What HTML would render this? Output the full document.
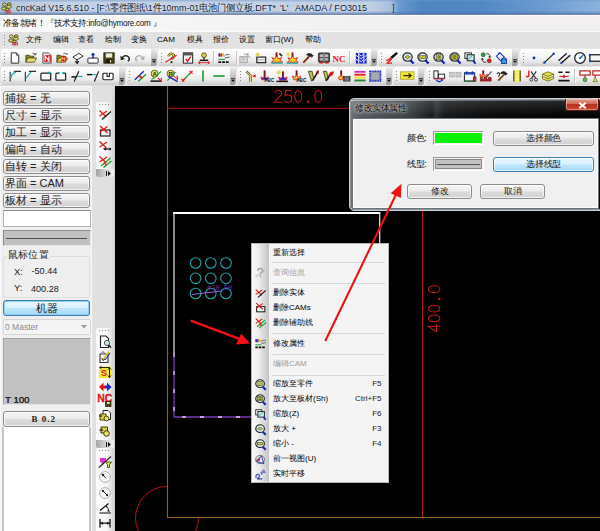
<!DOCTYPE html>
<html><head><meta charset="utf-8">
<style>
*{box-sizing:border-box;margin:0;padding:0}
html,body{width:600px;height:531px;overflow:hidden;background:#f0f0f0;font-family:"Liberation Sans",sans-serif;}
#root{position:relative;width:600px;height:531px;overflow:hidden;background:#f0f0f0}
.abs{position:absolute}
.t{position:absolute;white-space:nowrap;line-height:1}
#title{left:0;top:0;width:600px;height:15px;background:linear-gradient(rgba(110,150,205,.55) 0,rgba(255,255,255,0) 2.5px,rgba(255,255,255,0) 11px,rgba(80,115,175,.6) 13.5px,#7d8794 15px),linear-gradient(90deg,#aebfd8 0,#b9c8de 16px,#c2d0e3 60px,#c2d0e3 370px,#a9c0de 390px,#6a99cf 399px,#4f86c2 420px,#5088c4 480px,#6a9ad0 540px,#8ab2dc 600px)}
#status{left:0;top:15px;width:600px;height:16px;background:linear-gradient(90deg,#fafafa 0,#f6f5f5 200px,#f1efef 400px);border-top:1px solid #fdfdfd}
#menubar{left:0;top:30.5px;width:600px;height:18px;background:#e2e2e2;border-top:1px solid #fbfbfb}
.tb{position:absolute;height:18px;border-radius:3px;background:linear-gradient(#fefefe 0%,#f7f7f7 40%,#e9e9e9 72%,#cdcdcd 100%);}
.tb .chev{position:absolute;right:0;top:0;width:6px;height:100%;background:linear-gradient(#ececec,#c4c4c4 50%,#9c9c9c);border-radius:0 3px 3px 0}
.grip{position:absolute;left:3px;top:4px;width:1px;height:10px;background:repeating-linear-gradient(#8a8a8a 0 1px,transparent 1px 3px)}
.ic{position:absolute;width:14px;height:14px;overflow:visible;transform:scale(.93)}
#canvas{left:115px;top:86px;width:485px;height:445px;background:#000}
.btn{position:absolute;border:1px solid #8c8c8c;border-radius:3px;background:linear-gradient(#f6f6f6 0%,#eaeaea 48%,#dcdcdc 52%,#d2d2d2 100%);box-shadow:inset 0 0 0 1px rgba(255,255,255,.7);color:#222;}
.lbtn{left:3px;width:87px;height:15px;font-size:11px;line-height:13.5px;padding-left:1px;margin-top:.5px;white-space:nowrap;overflow:hidden}
.mi{position:absolute;left:273px;font-size:8px;line-height:1;color:#000;white-space:nowrap}
.mk{position:absolute;font-size:8px;line-height:1;color:#1a1a1a;white-space:nowrap;right:0}
.msep{position:absolute;left:272px;width:113px;height:1px;background:#d8d8d8}
.c{display:inline-block;width:1em;text-align:center;font-style:normal;overflow:visible;white-space:nowrap}
</style></head><body><div id="root">

<!-- title bar -->
<div id="title" class="abs"></div>
<svg class="abs" style="left:0.5px;top:2px" width="11.5" height="11.5" viewBox="0 0 11.5 12"><g stroke="#33331a" stroke-width=".8"><ellipse cx="3.2" cy="2.6" rx="1.9" ry="1.6" fill="#ece468"/><ellipse cx="8.3" cy="2.2" rx="2" ry="1.3" fill="#d0c848"/><ellipse cx="2.8" cy="6.8" rx="2.4" ry="1.7" fill="#dcd448"/><ellipse cx="8" cy="5" rx="2.7" ry="1.5" fill="#ece468"/><ellipse cx="6.3" cy="7.8" rx="2" ry="1.2" fill="#d0c848"/></g><rect x="4.2" y="8.8" width="6" height="3" fill="#b02c34"/><path d="M5 9.6L5.7 11.2L6.4 9.6M7.3 9.6V11.2M8.2 11H9.4V10.3H8.4V9.7H9.5" stroke="#f0d0d0" stroke-width=".45" fill="none"/></svg>
<div class="t" style="left:15.5px;top:2.5px;font-size:9.6px;color:#141c30;transform-origin:0 0;transform:scaleX(.929);text-shadow:0 0 3px rgba(255,255,255,.7)">cncKad V15.6.510 - [F:\<i class="c">零</i><i class="c">件</i><i class="c">图</i><i class="c">纸</i>\1<i class="c">件</i>10mm-01<i class="c">电</i><i class="c">池</i><i class="c">门</i><i class="c">侧</i><i class="c">立</i><i class="c">板</i>.DFT*</div>
<div class="t" style="left:280px;top:2.5px;font-size:9.6px;color:#141c30;transform-origin:0 0;transform:scaleX(.9465);text-shadow:0 0 3px rgba(255,255,255,.7)">'L'</div>
<div class="t" style="left:294.5px;top:2.5px;font-size:9.6px;color:#141c30;transform-origin:0 0;transform:scaleX(.9465);text-shadow:0 0 3px rgba(255,255,255,.7)">AMADA / FO3015</div>
<div class="t" style="left:391.5px;top:2.5px;font-size:9.6px;color:#141c30;transform-origin:0 0;transform:scaleX(.9465);text-shadow:0 0 3px rgba(255,255,255,.7)">]</div>

<!-- status -->
<div id="status" class="abs"></div>
<div class="t" style="left:2.5px;top:19px;font-size:8.6px;color:#111"><i class="c">准</i><i class="c">备</i><i class="c">就</i><i class="c">绪</i><i class="c">！</i></div>
<div class="t" style="left:46px;top:19px;font-size:8.6px;color:#111;letter-spacing:-0.25px;transform-origin:0 0;transform:scaleX(.94)"><i class="c">『</i><i class="c">技</i><i class="c">术</i><i class="c">支</i><i class="c">持</i>:info@hymore.com <i class="c">』</i></div>

<!-- menubar -->
<div id="menubar" class="abs"></div>
<div class="grip" style="left:4px;top:35px;height:10px"></div>
<svg class="abs" style="left:8px;top:34px" width="11.5" height="11.5" viewBox="0 0 11.5 12"><g stroke="#33331a" stroke-width=".8"><ellipse cx="3.2" cy="2.6" rx="1.9" ry="1.6" fill="#ece468"/><ellipse cx="8.3" cy="2.2" rx="2" ry="1.3" fill="#d0c848"/><ellipse cx="2.8" cy="6.8" rx="2.4" ry="1.7" fill="#dcd448"/><ellipse cx="8" cy="5" rx="2.7" ry="1.5" fill="#ece468"/><ellipse cx="6.3" cy="7.8" rx="2" ry="1.2" fill="#d0c848"/></g><rect x="4.2" y="8.8" width="6" height="3" fill="#b02c34"/><path d="M5 9.6L5.7 11.2L6.4 9.6M7.3 9.6V11.2M8.2 11H9.4V10.3H8.4V9.7H9.5" stroke="#f0d0d0" stroke-width=".45" fill="none"/></svg>
<div class="t" style="left:26px;top:35.5px;font-size:8.1px;color:#000"><i class="c">文</i><i class="c">件</i></div>
<div class="t" style="left:52.5px;top:35.5px;font-size:8.1px;color:#000"><i class="c">编</i><i class="c">辑</i></div>
<div class="t" style="left:78px;top:35.5px;font-size:8.1px;color:#000"><i class="c">查</i><i class="c">看</i></div>
<div class="t" style="left:104.5px;top:35.5px;font-size:8.1px;color:#000"><i class="c">绘</i><i class="c">制</i></div>
<div class="t" style="left:130.5px;top:35.5px;font-size:8.1px;color:#000"><i class="c">变</i><i class="c">换</i></div>
<div class="t" style="left:157px;top:35.5px;font-size:8.1px;color:#000">CAM</div>
<div class="t" style="left:186.5px;top:35.5px;font-size:8.1px;color:#000"><i class="c">模</i><i class="c">具</i></div>
<div class="t" style="left:212.5px;top:35.5px;font-size:8.1px;color:#000"><i class="c">报</i><i class="c">价</i></div>
<div class="t" style="left:238.5px;top:35.5px;font-size:8.1px;color:#000"><i class="c">设</i><i class="c">置</i></div>
<div class="t" style="left:264.5px;top:35.5px;font-size:8.1px;color:#000"><i class="c">窗</i><i class="c">口</i>(W)</div>
<div class="t" style="left:304.5px;top:35.5px;font-size:8.1px;color:#000"><i class="c">帮</i><i class="c">助</i></div>

<!-- TOOLBARS placeholder -->
<!--TB-->
<div class="abs" style="left:0;top:48px;width:600px;height:38px;background:#e9e9e9"></div>
<div class="tb" style="left:1px;top:48.5px;width:156px;height:17.5px"><div class="grip"></div><div class="chev"><svg style="position:absolute;left:1px;top:10.5px" width="4" height="4.5" viewBox="0 0 5 5"><path d="M0 .5H5" stroke="#111" stroke-width="1"/><path d="M0 2H5L2.5 4.8Z" fill="#111"/></svg></div></div>
<svg class="ic" style="left:7.5px;top:50.5px" viewBox="0 0 14 14"><path d="M3 1.5H8.5L11 4V12.5H3Z" fill="#fff" stroke="#222" stroke-width="1"/><path d="M8.5 1.5V4H11" fill="none" stroke="#222" stroke-width=".8"/></svg>
<svg class="ic" style="left:24.0px;top:50.5px" viewBox="0 0 14 14"><path d="M1.5 11.5V4H5L6 5H10V7" fill="#8a8420" stroke="#3a3a10" stroke-width=".8"/><path d="M1.5 11.5L3.5 7H13L10.5 11.5Z" fill="#e8e070" stroke="#3a3a10" stroke-width=".8"/><path d="M8.5 2.5C10 1.5 11.5 2 12 3.5M12 3.5L12.8 1.8M12 3.5L10.3 3.6" fill="none" stroke="#222" stroke-width=".8"/></svg>
<svg class="ic" style="left:39.5px;top:50.5px" viewBox="0 0 14 14"><path d="M2.5 1.5H8.5L11.5 4V12.5H2.5Z" fill="#e8e8e8" stroke="#555" stroke-width="1"/><rect x="3.5" y="4" width="7.5" height="7" fill="#e01010"/><path d="M5 10V5L9 10V5" fill="none" stroke="#fff" stroke-width="1.3"/></svg>
<svg class="ic" style="left:55.0px;top:50.5px" viewBox="0 0 14 14"><path d="M1.5 11.5V4H5L6 5H10V7" fill="#8a8420" stroke="#3a3a10" stroke-width=".8"/><path d="M1.5 11.5L3.5 7H13L10.5 11.5Z" fill="#e8c850" stroke="#3a3a10" stroke-width=".8"/><rect x="6" y="5" width="5.5" height="5.5" fill="#e01010"/><path d="M7 9.5V6L10 9.5V6" fill="none" stroke="#f8e8a0" stroke-width=".9"/><path d="M8.5 2.5C10 1.5 11.5 2 12 3.5M12 3.5L12.8 1.8" fill="none" stroke="#222" stroke-width=".8"/></svg>
<svg class="ic" style="left:70.5px;top:50.5px" viewBox="0 0 14 14"><path d="M1.5 6L8 2L12.5 5L6 9Z" fill="#fff" stroke="#222" stroke-width="1"/><path d="M6 9V12M4 10.5L6 12.8L8 10.5" fill="none" stroke="#111" stroke-width="1.2"/></svg>
<svg class="ic" style="left:86.0px;top:50.5px" viewBox="0 0 14 14"><rect x="1.5" y="7" width="11" height="5.5" rx="1" fill="#fff" stroke="#222" stroke-width="1"/><path d="M7 7.5V2.5" stroke="#1030c0" stroke-width="1.6"/><path d="M4.5 4L7 1L9.5 4Z" fill="#1030c0"/></svg>
<svg class="ic" style="left:102.0px;top:50.5px" viewBox="0 0 14 14"><rect x="1.5" y="1.5" width="11" height="11" fill="#4a4410" stroke="#1a1a08" stroke-width="1"/><rect x="3.5" y="2" width="7" height="4.5" fill="#f0f0e0"/><rect x="4" y="8.5" width="6" height="4" fill="#1a1a08"/><rect x="8" y="9.3" width="1.4" height="2.6" fill="#e8e8d0"/></svg>
<svg class="ic" style="left:117.5px;top:50.5px" viewBox="0 0 14 14"><path d="M4 7C5 4.5 9 3.5 11 6C12 7.5 11.5 9.5 10 10.5" fill="none" stroke="#222" stroke-width="1.5"/><path d="M2 4.5L2.5 9.5L7 8Z" fill="#222"/></svg>
<svg class="ic" style="left:133.0px;top:50.5px" viewBox="0 0 14 14"><path d="M10 7C9 4.5 5 3.5 3 6C2 7.5 2.5 9.5 4 10.5" fill="none" stroke="#b0b0b0" stroke-width="1.5"/><path d="M12 4.5L11.5 9.5L7 8Z" fill="#b0b0b0"/></svg>
<div class="tb" style="left:158px;top:48.5px;width:219px;height:17.5px"><div class="grip"></div><div class="chev"><svg style="position:absolute;left:1px;top:10.5px" width="4" height="4.5" viewBox="0 0 5 5"><path d="M0 .5H5" stroke="#111" stroke-width="1"/><path d="M0 2H5L2.5 4.8Z" fill="#111"/></svg></div></div>
<svg class="ic" style="left:163.7px;top:50.5px" viewBox="0 0 14 14"><path d="M4.5 5C4.5 1.5 10 1.5 10 5C10 7 7.5 7 7.5 9" fill="none" stroke="#3a3a10" stroke-width="2.6"/><path d="M4.5 5C4.5 1.5 10 1.5 10 5C10 7 7.5 7 7.5 9" fill="none" stroke="#e0d840" stroke-width="1.3"/><circle cx="7.5" cy="11.5" r="1.2" fill="#3a3a10"/><path d="M1 11.5L13 4" stroke="#e01818" stroke-width="1.2"/></svg>
<svg class="ic" style="left:181.0px;top:50.5px" viewBox="0 0 14 14"><rect x="2" y="1.5" width="10" height="11" fill="#fff" stroke="#333" stroke-width="1.2"/><rect x="2" y="1.5" width="10" height="2.8" fill="#555"/><path d="M4.5 8L6.5 10.5L10 5.5" fill="none" stroke="#e01818" stroke-width="1.6"/></svg>
<svg class="ic" style="left:196.5px;top:50.5px" viewBox="0 0 14 14"><circle cx="7" cy="4" r="2.6" fill="#d8d040" stroke="#3a3a10" stroke-width=".8"/><path d="M7 6.5V9" stroke="#3a3a10" stroke-width="1.6"/><path d="M2.5 9.5H11.5" stroke="#111" stroke-width="1.6"/><path d="M1 12H13M1 12L3 10.5M1 12L3 13.5M13 12L11 10.5M13 12L11 13.5" stroke="#e01818" stroke-width="1" fill="none"/></svg>
<svg class="ic" style="left:217.0px;top:50.5px" viewBox="0 0 14 14"><rect x="1" y="2" width="2" height="3.5" fill="#2030d0"/><rect x="3" y="2" width="2" height="3.5" fill="#d02020"/><rect x="5" y="2" width="2" height="3.5" fill="#e0c020"/><path d="M7.5 5C9 3 11 3 13 3.5M8 7L13 6" stroke="#555" stroke-width="1" fill="none"/><path d="M1 8.5H8" stroke="#20a040" stroke-width="1.2"/><path d="M1 11.5H13" stroke="#111" stroke-width="2" stroke-dasharray="3 1"/></svg>
<svg class="ic" style="left:238.0px;top:50.5px" viewBox="0 0 14 14"><rect x="1.5" y="5.5" width="8" height="6.5" fill="#d8d8d8" stroke="#a8a8a8" stroke-width="1"/><path d="M8 2L12.5 7M6 2.5L7.5 4M10.5 1.5L10 3.5" stroke="#a0a0a0" stroke-width="1.2"/><circle cx="5" cy="8" r="1.8" fill="#c0c0c0"/></svg>
<svg class="ic" style="left:254.0px;top:50.5px" viewBox="0 0 14 14"><rect x="2.5" y="6" width="9.5" height="6" fill="#f4f4f4" stroke="#222" stroke-width="1.3"/><path d="M3 9H12" stroke="#888" stroke-width=".8"/><path d="M3.5 1V6M1 3.5H6M1.7 1.7L5.3 5.3M5.3 1.7L1.7 5.3" stroke="#d8d020" stroke-width=".9"/></svg>
<svg class="ic" style="left:270.0px;top:50.5px" viewBox="0 0 14 14"><path d="M6.5 1V8" stroke="#7a1010" stroke-width="2"/><path d="M6.5 5L9 8L12 6.5L10.5 9.5L13 11.5H1L3.5 9.5L1.5 6.5L4.5 8Z" fill="#f0d030" stroke="#e02020" stroke-width=".9"/><path d="M1 12.5H13" stroke="#20a0a0" stroke-width="1.3"/><path d="M9.5 2L12.5 5" stroke="#222" stroke-width="1.6"/><path d="M8.5 1.2L9.5 2" stroke="#d8d020" stroke-width="1"/></svg>
<svg class="ic" style="left:285.0px;top:50.5px" viewBox="0 0 14 14"><path d="M7.5 1V8" stroke="#7a1010" stroke-width="2"/><path d="M7.5 5L10 8L13 6.5L11.5 9.5L13.5 11.5H2L4.5 9.5L2.5 6.5L5.5 8Z" fill="#f0d030" stroke="#e02020" stroke-width=".9"/><path d="M1 12.5H13.5" stroke="#20a0a0" stroke-width="1.3"/><path d="M3 .5V5M.8 2.8H5.2M1.4 1.2L4.6 4.4M4.6 1.2L1.4 4.4" stroke="#d8d020" stroke-width=".8"/></svg>
<svg class="ic" style="left:300.5px;top:50.5px" viewBox="0 0 14 14"><path d="M2 12L8.5 5" stroke="#7a2a10" stroke-width="2"/><path d="M5.5 3.5C7.5 1.5 10.5 2 12.5 4.5L11 6L8.5 4.5Z" fill="#222" stroke="#222" stroke-width="1"/></svg>
<svg class="ic" style="left:316.5px;top:50.5px" viewBox="0 0 14 14"><rect x="1" y="1.5" width="12" height="10" rx="1" fill="#484848" stroke="#222" stroke-width=".8"/><rect x="2.5" y="3" width="3.5" height="3" fill="#b8b8b8"/><rect x="8" y="3" width="3.5" height="3" fill="#b8b8b8"/><rect x="2.5" y="7" width="3.5" height="3" fill="#a8a8a8"/><rect x="8" y="7" width="3.5" height="3" fill="#a8a8a8"/><path d="M7 2V11" stroke="#ddd" stroke-width=".8"/><path d="M2 12H6M8 12H12" stroke="#e01818" stroke-width="1.6"/></svg>
<svg class="ic" style="left:332.0px;top:50.5px" viewBox="0 0 14 14"><text x="7" y="11" text-anchor="middle" font-family="Liberation Serif" font-weight="bold" font-size="9.6" fill="#e01818">NC</text></svg>
<svg class="ic" style="left:353.5px;top:50.5px" viewBox="0 0 14 14"><rect x="1.5" y="1.5" width="11.5" height="11.5" fill="#1828d0"/><path d="M4.5 1.5V13M10 1.5V13" stroke="#e8e8ff" stroke-width="1.2"/><path d="M5 3L7.2 5L9.5 3M5 6L7.2 8L9.5 6M5 9L7.2 11L9.5 9M1.5 4L4 6M1.5 8L4 10M13 4L10.5 6M13 8L10.5 10" stroke="#e8e8ff" stroke-width="1" fill="none"/></svg>
<div class="abs" style="left:213px;top:50.5px;width:1px;height:14px;background:#c4c4c4;border-right:1px solid #fafafa;width:2px"></div>
<div class="abs" style="left:236px;top:50.5px;width:1px;height:14px;background:#c4c4c4;border-right:1px solid #fafafa;width:2px"></div>
<div class="abs" style="left:349px;top:50.5px;width:1px;height:14px;background:#c4c4c4;border-right:1px solid #fafafa;width:2px"></div>
<div class="tb" style="left:378px;top:48.5px;width:140px;height:17.5px"><div class="grip"></div><div class="chev"><svg style="position:absolute;left:1px;top:10.5px" width="4" height="4.5" viewBox="0 0 5 5"><path d="M0 .5H5" stroke="#111" stroke-width="1"/><path d="M0 2H5L2.5 4.8Z" fill="#111"/></svg></div></div>
<svg class="ic" style="left:385.0px;top:50.5px" viewBox="0 0 14 14"><path d="M12.5 1.5L6 7" stroke="#111" stroke-width="2.6"/><path d="M6.5 6.5L1 10M6.5 8L2 12.5H7" stroke="#e01818" stroke-width="1.5" fill="none"/></svg>
<svg class="ic" style="left:400.5px;top:50.5px" viewBox="0 0 14 14"><path d="M9.5 9.5L13 13" stroke="#1020c0" stroke-width="2.4"/><ellipse cx="6.5" cy="6" rx="5" ry="4.5" fill="#d8f0f0" stroke="#222" stroke-width="1.3"/><path d="M3.5 6L6.5 4L9.5 6L6.5 8Z" fill="#c8c030" stroke="#444" stroke-width=".6"/></svg>
<svg class="ic" style="left:416.0px;top:50.5px" viewBox="0 0 14 14"><path d="M9.5 9.5L13 13" stroke="#1020c0" stroke-width="2.4"/><ellipse cx="6.5" cy="6" rx="5" ry="4.5" fill="#d8f0f0" stroke="#222" stroke-width="1.3"/><rect x="3.5" y="4.5" width="6" height="3" fill="#c8c030" stroke="#444" stroke-width=".6"/></svg>
<svg class="ic" style="left:432.0px;top:50.5px" viewBox="0 0 14 14"><path d="M9.5 9.5L13 13" stroke="#1020c0" stroke-width="2.4"/><ellipse cx="6.5" cy="6" rx="5" ry="4.5" fill="#d8f0f0" stroke="#222" stroke-width="1.3"/><rect x="4" y="3.5" width="5" height="5" fill="#c8c030" stroke="#444" stroke-width=".6"/><path d="M5.5 5H7.5V7H5.5" stroke="#333" stroke-width=".6" fill="none"/></svg>
<svg class="ic" style="left:447.7px;top:50.5px" viewBox="0 0 14 14"><path d="M9.5 9.5L13 13" stroke="#1020c0" stroke-width="2.4"/><ellipse cx="6.5" cy="6" rx="5" ry="4.5" fill="#d8f0f0" stroke="#222" stroke-width="1.3"/><rect x="3.5" y="3.5" width="6" height="5" fill="#b8b028" stroke="#444" stroke-width=".6"/><path d="M5 5H8M5 7H8" stroke="#333" stroke-width=".7"/></svg>
<svg class="ic" style="left:463.0px;top:50.5px" viewBox="0 0 14 14"><rect x="1.5" y="1.5" width="7" height="6" fill="#fff" stroke="#222" stroke-width="1"/><rect x="4" y="3.5" width="7.5" height="6.5" fill="#d0ecec" stroke="#222" stroke-width="1.1"/><path d="M4.5 9L10 4" stroke="#20a0a0" stroke-width="1"/><path d="M10.5 10L13 13" stroke="#1020c0" stroke-width="2"/></svg>
<svg class="ic" style="left:478.5px;top:50.5px" viewBox="0 0 14 14"><circle cx="4" cy="3.5" r="2.2" fill="#20a040" stroke="#104010" stroke-width=".6"/><circle cx="10.5" cy="10" r="2.2" fill="#e02020" stroke="#601010" stroke-width=".6"/><path d="M7.5 2.5C10 2 11.5 3.5 11 6M3 8C2.5 10.5 4.5 12 7 11.5" stroke="#222" stroke-width="1" fill="none"/><path d="M10 5L11 7L12.5 5M2 9L3 7L4.5 9" stroke="#222" stroke-width=".8" fill="none"/></svg>
<svg class="ic" style="left:494.0px;top:50.5px" viewBox="0 0 14 14"><path d="M2 5L6 1.5L10.5 6L6.5 10Z" fill="#f0f4ff" stroke="#1828c0" stroke-width="1.1"/><path d="M4 3L5 1L7 3" stroke="#1828c0" stroke-width=".9" fill="none"/><rect x="7.5" y="8" width="5.5" height="5" fill="#30a0e0" stroke="#1828c0" stroke-width=".9"/><path d="M10.5 6C12 7 12 8 11.5 9" stroke="#1828c0" stroke-width="1" fill="none"/></svg>
<div class="tb" style="left:520px;top:48.5px;width:84px;height:17.5px"><div class="grip"></div></div>
<svg class="ic" style="left:526.6px;top:50.5px" viewBox="0 0 14 14"><circle cx="7" cy="7" r="1.5" fill="#1030a0"/></svg>
<svg class="ic" style="left:542.0px;top:50.5px" viewBox="0 0 14 14"><path d="M2 12L12 2.5" stroke="#222" stroke-width="1.3"/><circle cx="2" cy="12" r="1.3" fill="#1040c0"/><circle cx="12" cy="2.5" r="1.3" fill="#1040c0"/></svg>
<svg class="ic" style="left:557.0px;top:50.5px" viewBox="0 0 14 14"><path d="M1 10L10 2M4 12.5L13 4.5" stroke="#222" stroke-width="1.5"/><circle cx="4" cy="12.5" r="1.1" fill="#1040c0"/><circle cx="13" cy="4.5" r="1.1" fill="#1040c0"/></svg>
<svg class="ic" style="left:572.6px;top:50.5px" viewBox="0 0 14 14"><circle cx="7" cy="7" r="5.7" fill="#f4f8ff" stroke="#222" stroke-width="1.4"/><path d="M7 7L10.5 4" stroke="#1040c0" stroke-width="1.1"/><circle cx="7" cy="7" r="1" fill="#1040c0"/></svg>
<svg class="ic" style="left:588.0px;top:50.5px" viewBox="0 0 14 14"><rect x="1.5" y="3.5" width="13" height="7" fill="#f4f4f4" stroke="#222" stroke-width="1.4"/><circle cx="1.5" cy="10.5" r="1.2" fill="#1040c0"/><circle cx="1.5" cy="3.5" r="1.2" fill="#1040c0"/></svg>
<div class="tb" style="left:1px;top:67px;width:124px;height:17.5px"><div class="grip"></div><div class="chev"><svg style="position:absolute;left:1px;top:10.5px" width="4" height="4.5" viewBox="0 0 5 5"><path d="M0 .5H5" stroke="#111" stroke-width="1"/><path d="M0 2H5L2.5 4.8Z" fill="#111"/></svg></div></div>
<svg class="ic" style="left:7.5px;top:68.5px" viewBox="0 0 14 14"><path d="M1.8 13V2.5M5.8 2H13.5" fill="none" stroke="#333" stroke-width="1.2"/><path d="M2.6 9.5C2.8 6 4.5 3.6 8.2 2.8" fill="none" stroke="#20b0b0" stroke-width="1.4"/></svg>
<svg class="ic" style="left:23.0px;top:68.5px" viewBox="0 0 14 14"><path d="M2 13V2.5M5.8 2H13.5" fill="none" stroke="#333" stroke-width="1.2"/><path d="M2.6 9.2L8.2 2.8" stroke="#20b0b0" stroke-width="1.3"/></svg>
<svg class="ic" style="left:38.5px;top:68.5px" viewBox="0 0 14 14"><rect x="1.5" y="4" width="10.5" height="7.5" rx="1" fill="#f8f8f8" stroke="#222" stroke-width="1.3"/><path d="M8.5 3.2H11.5L12.7 4.5V6" stroke="#20b0b0" stroke-width="1.3" fill="none"/></svg>
<svg class="ic" style="left:54.0px;top:68.5px" viewBox="0 0 14 14"><path d="M5 4H2.5Q1.5 4 1.5 5V10.5Q1.5 11.5 2.5 11.5H11Q12 11.5 12 10.5V5Q12 4 11 4H9" fill="#f8f8f8" stroke="#222" stroke-width="1.3"/><path d="M3 3.2H5V5M11 3.2H9V5" stroke="#20b0b0" stroke-width="1.2" fill="none"/></svg>
<svg class="ic" style="left:70.0px;top:68.5px" viewBox="0 0 14 14"><path d="M1 8H6" stroke="#111" stroke-width="1.6"/><path d="M4 13L9 2" stroke="#111" stroke-width="1.2"/><path d="M7 7.5H13" stroke="#20b0b0" stroke-width="1.2"/></svg>
<svg class="ic" style="left:85.5px;top:68.5px" viewBox="0 0 14 14"><path d="M0.5 5.5H6" stroke="#111" stroke-width="1.6"/><path d="M6 5.5H11" stroke="#20b0b0" stroke-width="1.2"/><path d="M8.5 13L13 2" stroke="#111" stroke-width="1.2"/></svg>
<svg class="ic" style="left:101.0px;top:68.5px" viewBox="0 0 14 14"><path d="M6 4H2.5Q1.5 4 1.5 5V10Q1.5 11 2.5 11H11.5Q12.5 11 12.5 10V5Q12.5 4 11.5 4H8.5V7.5H6Z" fill="#fafafa" stroke="#222" stroke-width="1.2"/></svg>
<div class="tb" style="left:126px;top:67px;width:110px;height:17.5px"><div class="grip"></div><div class="chev"><svg style="position:absolute;left:1px;top:10.5px" width="4" height="4.5" viewBox="0 0 5 5"><path d="M0 .5H5" stroke="#111" stroke-width="1"/><path d="M0 2H5L2.5 4.8Z" fill="#111"/></svg></div></div>
<svg class="ic" style="left:133.0px;top:68.5px" viewBox="0 0 14 14"><path d="M1.5 11L11 2" stroke="#1828c0" stroke-width="1.5"/><path d="M5 13L13.5 5" stroke="#20a030" stroke-width="1.5"/><path d="M5.5 6.5L9.5 9.5" stroke="#e01818" stroke-width="2"/></svg>
<svg class="ic" style="left:149.0px;top:68.5px" viewBox="0 0 14 14"><circle cx="5.5" cy="4.5" r="3.8" fill="#e8e060" stroke="#3a3a10" stroke-width=".8"/><text x="5.5" y="7" text-anchor="middle" font-family="Liberation Sans" font-weight="bold" font-size="6.5" fill="#222">A</text><path d="M7 7L12.5 2" stroke="#20a030" stroke-width="1.3"/><path d="M1 12.5H13" stroke="#111" stroke-width="1.6"/><path d="M9 9L12 12M12 9C13.5 10 13 12 11.5 12.5" stroke="#e01818" stroke-width="1.1" fill="none"/><path d="M2 10.5L6 8.5" stroke="#20a030" stroke-width="1.2"/></svg>
<svg class="ic" style="left:165.0px;top:68.5px" viewBox="0 0 14 14"><circle cx="5.5" cy="4.5" r="3.8" fill="#e8e060" stroke="#3a3a10" stroke-width=".8"/><text x="5.5" y="7" text-anchor="middle" font-family="Liberation Sans" font-weight="bold" font-size="6.5" fill="#222">R</text><path d="M2 12L11 2.5" stroke="#20a030" stroke-width="1.3"/><path d="M3 7.5L13 13" stroke="#1828c0" stroke-width="1.5"/><path d="M9 7L12.5 10.5M12 7C13.5 8 13.5 10.5 12 11" stroke="#e01818" stroke-width="1.1" fill="none"/></svg>
<svg class="ic" style="left:180.0px;top:68.5px" viewBox="0 0 14 14"><path d="M3 11.5L11.5 3" stroke="#20a030" stroke-width="1.5"/><path d="M1 10L4 13M1.5 13L4.5 10M10 1.5L13 4.5M10 4.5L13 1.5" stroke="#e01818" stroke-width="1.1"/></svg>
<svg class="ic" style="left:195.7px;top:68.5px" viewBox="0 0 14 14"><path d="M7 1V13" stroke="#20a030" stroke-width="1.8"/></svg>
<svg class="ic" style="left:211.7px;top:68.5px" viewBox="0 0 14 14"><path d="M1 7H13" stroke="#20a030" stroke-width="1.8"/></svg>
<div class="tb" style="left:237px;top:67px;width:155px;height:17.5px"><div class="grip"></div><div class="chev"><svg style="position:absolute;left:1px;top:10.5px" width="4" height="4.5" viewBox="0 0 5 5"><path d="M0 .5H5" stroke="#111" stroke-width="1"/><path d="M0 2H5L2.5 4.8Z" fill="#111"/></svg></div></div>
<svg class="ic" style="left:243.7px;top:68.5px" viewBox="0 0 14 14"><path d="M2 2L6.5 6.5V13" stroke="#3a3a10" stroke-width="2.4" fill="none"/><path d="M2 2L6.5 6.5V13" stroke="#e8e070" stroke-width="1.1" fill="none"/><path d="M8 7L12 5.5V9Z" fill="#e01818"/></svg>
<svg class="ic" style="left:259.0px;top:68.5px" viewBox="0 0 14 14"><path d="M5.5 1V9" stroke="#7a1010" stroke-width="2"/><path d="M5.5 7L7 9.5L9.5 8L8.5 11H2.5L1.5 8L4 9.5Z" fill="#1828e0" stroke="#e02020" stroke-width=".9"/><text x="10.5" y="13" text-anchor="middle" font-family="Liberation Sans" font-weight="bold" font-size="5" fill="#111">ABC</text></svg>
<svg class="ic" style="left:275.0px;top:68.5px" viewBox="0 0 14 14"><path d="M8 2V9" stroke="#7a1010" stroke-width="2"/><path d="M8 7L10 9.5L12.5 8L11.5 11.5H4.5L3.5 8L6 9.5Z" fill="#1828e0" stroke="#e02020" stroke-width=".9"/><path d="M1 12.8H13.5" stroke="#111" stroke-width="1.6"/><path d="M3.5 .5V5.5M1 3H6M1.7 1.2L5.3 4.8M5.3 1.2L1.7 4.8" stroke="#d8d020" stroke-width=".8"/></svg>
<svg class="ic" style="left:290.5px;top:68.5px" viewBox="0 0 14 14"><path d="M5.5 1V8" stroke="#7a1010" stroke-width="2"/><path d="M5.5 6L7.5 8.5L10 7L8.5 11H2.5L1 7L3.5 8.5Z" fill="#f0c030" stroke="#e02020" stroke-width=".9"/><text x="10.5" y="13" text-anchor="middle" font-family="Liberation Sans" font-weight="bold" font-size="5" fill="#111">ABC</text></svg>
<svg class="ic" style="left:305.5px;top:68.5px" viewBox="0 0 14 14"><path d="M2 2L5.5 12.5L8 10L6 2Z" fill="#c8c060" stroke="#3a3a10" stroke-width=".9"/><path d="M6.5 12L12.5 2" stroke="#222" stroke-width="1.8"/><path d="M10 3L13 1L12.5 5" fill="#c02020" stroke="#801010" stroke-width=".6"/></svg>
<svg class="ic" style="left:321.0px;top:68.5px" viewBox="0 0 14 14"><path d="M2 2L5 12.5L7.5 10L5.5 2Z" fill="#c8c060" stroke="#3a3a10" stroke-width=".9"/><path d="M5 12L9 6" stroke="#222" stroke-width="1.8"/><path d="M7.5 6.5C8 3 11 1.5 13.5 2.5L12 6L9.5 7.5Z" fill="#e01818"/></svg>
<svg class="ic" style="left:337.0px;top:68.5px" viewBox="0 0 14 14"><path d="M4 1V8" stroke="#7a1010" stroke-width="2"/><path d="M4 6L6 8.5L5 11H2L1 8.5Z" fill="#f0c030" stroke="#e02020" stroke-width=".9"/><rect x="6.5" y="7.5" width="7" height="5" fill="#555" stroke="#222" stroke-width=".7"/><path d="M9 7.5V12.5M11.2 7.5V12.5" stroke="#ccc" stroke-width=".6"/></svg>
<svg class="ic" style="left:353.0px;top:68.5px" viewBox="0 0 14 14"><rect x="1" y="1.5" width="12" height="2" fill="#d030c0"/><rect x="1" y="4.6" width="12" height="2" fill="#e02020"/><rect x="1" y="7.6" width="12" height="2.2" fill="#f0e030"/><rect x="1" y="10.8" width="12" height="2" fill="#208030"/></svg>
<svg class="ic" style="left:368.0px;top:68.5px" viewBox="0 0 14 14"><rect x="1.5" y="2" width="11.5" height="10.5" fill="#9098b0" stroke="#1828d0" stroke-width="1.6" stroke-dasharray="1.2 .6"/><rect x="3.5" y="4" width="7.5" height="6.5" fill="#a8a8a8"/></svg>
<div class="tb" style="left:393px;top:67px;width:31px;height:17.5px"><div class="grip"></div><div class="chev"><svg style="position:absolute;left:1px;top:10.5px" width="4" height="4.5" viewBox="0 0 5 5"><path d="M0 .5H5" stroke="#111" stroke-width="1"/><path d="M0 2H5L2.5 4.8Z" fill="#111"/></svg></div></div>
<svg class="ic" style="left:400.5px;top:68.5px" viewBox="0 0 14 14"><rect x="-1" y="2.5" width="14.5" height="8" fill="#f0e838" stroke="#a8a020" stroke-width=".8"/><path d="M2 6.5H10M7.5 4.2L10.5 6.5L7.5 8.8" stroke="#3a2a10" stroke-width="1.3" fill="none"/></svg>
<div class="tb" style="left:426px;top:67px;width:178px;height:17.5px"><div class="grip"></div></div>
<svg class="ic" style="left:431.7px;top:68.5px" viewBox="0 0 14 14"><rect x="1.5" y="1.5" width="4.5" height="8" fill="#f4f4f4" stroke="#222" stroke-width="1"/><rect x="6.5" y="5" width="6.5" height="4.5" fill="#f4f4f4" stroke="#222" stroke-width="1"/><path d="M1.5 10.2H6M6.5 10.2H13" stroke="#e02020" stroke-width="1"/><path d="M4 11C5 13.5 9 13.5 10 11.5" stroke="#1828d0" stroke-width="1.3" fill="none"/><path d="M9 11L10.5 10.5L10.7 12.5" stroke="#1828d0" stroke-width="1" fill="none"/></svg>
<svg class="ic" style="left:447.7px;top:68.5px" viewBox="0 0 14 14"><rect x="1" y="3" width="5.5" height="5" fill="#c4c4c4" stroke="#b0b0b0" stroke-width=".8"/><rect x="8" y="3" width="5.5" height="5" fill="#c4c4c4" stroke="#b0b0b0" stroke-width=".8"/><path d="M1 5.5H6.5M8 5.5H13.5" stroke="#dcdcdc" stroke-width=".8"/></svg>
<svg class="ic" style="left:463.0px;top:68.5px" viewBox="0 0 14 14"><rect x="1" y="3.5" width="11" height="9" fill="#f4f4ff" stroke="#222" stroke-width="1.1"/><path d="M1 4.5H12" stroke="#2060d0" stroke-width="2"/><path d="M3.5 2V5M9.5 2V5" stroke="#1828d0" stroke-width="1.2"/><path d="M1 12.5H12" stroke="#208030" stroke-width="1.2"/><rect x="10.5" y="8" width="3" height="4.5" fill="#c04040" stroke="#401010" stroke-width=".6"/></svg>
<svg class="ic" style="left:479.0px;top:68.5px" viewBox="0 0 14 14"><path d="M4 1V6" stroke="#7a1010" stroke-width="2"/><path d="M4 4.5L6 7L8.5 5L8 8H1L0.5 5L2.5 7Z" fill="#f0c030" stroke="#e02020" stroke-width=".9"/><path d="M7 9L13 2" stroke="#555" stroke-width="1.2"/><path d="M1 8.5H3V10.5H5V8.5H7.5V10.5H9.5V8.5H12.5V12.5H1Z" fill="#c02020" stroke="#601010" stroke-width=".7"/></svg>
<svg class="ic" style="left:494.5px;top:68.5px" viewBox="0 0 14 14"><path d="M3 12L9 5.5" stroke="#7a4a10" stroke-width="2"/><path d="M5.5 4C7.5 1.5 10.5 2 12.5 4.5L11 6L8.5 4.5Z" fill="#222" stroke="#222" stroke-width="1"/><path d="M1.5 5C2 3 4 3 4.5 4.5C4.8 6 3 6.5 3.5 8" stroke="#222" stroke-width="1.1" fill="none"/></svg>
<svg class="ic" style="left:510.0px;top:68.5px" viewBox="0 0 14 14"><rect x="3" y="1" width="8" height="12" fill="#f0e860"/><path d="M3.5 1V13M10.5 1V13" stroke="#6a6a20" stroke-width="1.6"/><path d="M5.5 3.5H8.5M5.5 7H8.5M5.5 10.5H8.5" stroke="#fafad0" stroke-width="1"/></svg>
<svg class="ic" style="left:525.4px;top:68.5px" viewBox="0 0 14 14"><path d="M3.5 1V7.5H.5" stroke="#e02020" stroke-width="1.5" fill="none"/><path d="M6 2L11 9.5M11.5 2L6.5 9.5" stroke="#333" stroke-width="1.2"/><circle cx="6.3" cy="11" r="1.6" fill="none" stroke="#333" stroke-width="1"/><circle cx="11.3" cy="11" r="1.6" fill="none" stroke="#333" stroke-width="1"/></svg>
<svg class="ic" style="left:541.4px;top:68.5px" viewBox="0 0 14 14"><path d="M1 5L7 2.5L13 5L7 7.5Z M1 7.5L7 10L13 7.5M1 10L7 12.5L13 10M1 5V10M13 5V10" fill="#e8e040" stroke="#6a6a10" stroke-width=".9"/></svg>
<svg class="ic" style="left:557.0px;top:68.5px" viewBox="0 0 14 14"><path d="M1 3H5.5M8.5 3H13M1 12H13" stroke="#111" stroke-width="1.8"/><path d="M2 7.5H12" stroke="#e02020" stroke-width="1.2"/><path d="M7 5.5L9 7.5L7 9.5L5 7.5Z" fill="#e02020"/></svg>
<svg class="ic" style="left:578.0px;top:68.5px" viewBox="0 0 14 14"><rect x="1.5" y="1.5" width="11" height="4.5" fill="#fff" stroke="#c02020" stroke-width="1.3"/><path d="M7 6V9.5" stroke="#c02020" stroke-width="1.3"/><circle cx="7" cy="11" r="2" fill="#60c060" stroke="#206020" stroke-width=".8"/></svg>
<svg class="ic" style="left:591.0px;top:68.5px" viewBox="0 0 14 14"><rect x="1.5" y="1.5" width="11" height="4.5" fill="#fff" stroke="#c02020" stroke-width="1.3"/><path d="M4 6V9" stroke="#c02020" stroke-width="1.3"/><path d="M1.5 13L4 8.5L6.5 13Z" fill="#e8e040" stroke="#6a6a10" stroke-width=".7"/></svg>
<div class="abs" style="left:574px;top:69px;width:1px;height:14px;background:#c4c4c4;border-right:1px solid #fafafa;width:2px"></div>
<div class="abs" style="left:0;top:85px;width:600px;height:1px;background:#dcdcdc"></div>
<!--/TB-->

<!-- canvas -->
<div id="canvas" class="abs"></div>
<svg class="abs" style="left:0;top:0" width="600" height="531" viewBox="0 0 600 531">
  <!-- brown sheet -->
  <path d="M167.5 86 V517.5 H600" fill="none" stroke="#96601a" stroke-width="1.1"/>
  <!-- red dims -->
  <path d="M167 108.3 H350" stroke="#b81414" stroke-width="1.1"/>
  <path d="M422.5 210 V517" stroke="#b81414" stroke-width="1.1"/>
  <path d="M167 486.5 A31.5 31.5 0 1 0 198.5 518" fill="none" stroke="#b81414" stroke-width="1"/>
  
  <!-- part -->
  <path d="M173 213 H380.3" stroke="#fff" stroke-width="2"/>
  <path d="M174 212 V353" stroke="#e8e8e8" stroke-width="1.2"/>
  <path d="M379.7 212 V243" stroke="#e8e8e8" stroke-width="1.2"/>
  <path d="M174 353 V417 H251" fill="none" stroke="#7a38b0" stroke-width="1.3"/>
  <path d="M174 353 V417 H251" fill="none" stroke="#d8d0e8" stroke-width="1.3" stroke-dasharray="4 14"/>
  <g fill="none" stroke="#1fa6a6" stroke-width="1.1">
    <circle cx="195.6" cy="263" r="5.3"/><circle cx="210.8" cy="263" r="5.3"/><circle cx="226" cy="263" r="5.3"/>
    <circle cx="195.6" cy="278.3" r="5.3"/><circle cx="210.8" cy="278.3" r="5.3"/><circle cx="226" cy="278.3" r="5.3"/>
    <circle cx="195.6" cy="293.5" r="5.3"/><circle cx="210.8" cy="293.5" r="5.3"/><circle cx="226" cy="293.5" r="5.3"/>
  </g>
  <path d="M192 294.5 L221 291" stroke="#a060e0" stroke-width="1.2"/>
  <text x="207" y="290" font-family="Liberation Mono" font-size="7" fill="#7030b0">ø10.00</text>
  <g transform="translate(274.2,90.1)" fill="none" stroke="#cc1818" stroke-width="1.05"><g transform="translate(0,0)"><path d="M0.6 3.2C0.6 -0.8 7.4 -0.8 7.4 3.2C7.4 6.2 2 8.6 0.4 12.2H7.8"/></g><g transform="translate(10,0)"><path d="M7.2 0.3H1.3L0.8 5.7C3 3.9 7.5 4.4 7.5 8.3C7.5 12.9 1.6 13.4 0.4 10.4"/></g><g transform="translate(20,0)"><ellipse cx="4" cy="6.25" rx="3.5" ry="5.9"/></g><g transform="translate(30,0)"><circle cx="4" cy="11.7" r="0.7" fill="#cc1818"/></g><g transform="translate(40,0)"><ellipse cx="4" cy="6.25" rx="3.5" ry="5.9"/></g></g>
  <g transform="translate(428,332) rotate(-90) scale(.972,.98)" fill="none" stroke="#cc1818" stroke-width="1.05"><g transform="translate(0,0)"><path d="M5.8 12.4V0.3L0.3 8.8H8"/></g><g transform="translate(10,0)"><ellipse cx="4" cy="6.25" rx="3.5" ry="5.9"/></g><g transform="translate(20,0)"><ellipse cx="4" cy="6.25" rx="3.5" ry="5.9"/></g><g transform="translate(30,0)"><circle cx="4" cy="11.7" r="0.7" fill="#cc1818"/></g><g transform="translate(40,0)"><ellipse cx="4" cy="6.25" rx="3.5" ry="5.9"/></g></g>
</svg>

<!-- LEFT placeholder -->
<!-- left panel -->
<div class="abs" style="left:0;top:86px;width:115px;height:445px;background:#e0e0e0"></div>
<div class="abs" style="left:0;top:86px;width:92px;height:445px;border-top:1px solid #fafafa;border-left:1px solid #fafafa;background:#efefef"></div>
<div class="abs" style="left:91px;top:86px;width:1px;height:445px;background:#f8f8f8"></div>
<div class="abs" style="left:112px;top:86px;width:3px;height:445px;background:linear-gradient(90deg,#e0e0e0,#cccccc)"></div>
<div class="btn lbtn" style="top:90px"><i class="c">捕</i><i class="c">捉</i> = <i class="c">无</i></div>
<div class="btn lbtn" style="top:107px"><i class="c">尺</i><i class="c">寸</i> = <i class="c">显</i><i class="c">示</i></div>
<div class="btn lbtn" style="top:124px"><i class="c">加</i><i class="c">工</i> = <i class="c">显</i><i class="c">示</i></div>
<div class="btn lbtn" style="top:141px"><i class="c">偏</i><i class="c">向</i> = <i class="c">自</i><i class="c">动</i></div>
<div class="btn lbtn" style="top:158px"><i class="c">自</i><i class="c">转</i> = <i class="c">关</i><i class="c">闭</i></div>
<div class="btn lbtn" style="top:175px"><i class="c">界</i><i class="c">面</i> = CAM</div>
<div class="btn lbtn" style="top:192px"><i class="c">板</i><i class="c">材</i> = <i class="c">显</i><i class="c">示</i></div>
<div class="abs" style="left:3px;top:210px;width:88px;height:17px;background:#fff;border:1px solid #b4b4b4;border-top-color:#8a8a8a"></div>
<div class="abs" style="left:3px;top:230px;width:88px;height:16px;background:#c0c0c0;border:1px solid #8c8c8c;border-right-color:#e8e8e8;border-bottom-color:#e8e8e8"></div>
<div class="abs" style="left:6px;top:238px;width:81px;height:1px;background:#505050"></div>
<div class="abs" style="left:3px;top:256px;width:87px;height:42px;border:1px solid #dedede;border-radius:2px"></div>
<div class="t" style="left:7px;top:250px;font-size:10.2px;color:#222;background:#efefef;padding:0 1px"><i class="c">鼠</i><i class="c">标</i><i class="c">位</i><i class="c">置</i></div>
<div class="t" style="left:14px;top:267px;font-size:9.5px;color:#222">X:</div>
<div class="t" style="left:31.5px;top:266.5px;font-size:9.1px;color:#222">-50.44</div>
<div class="t" style="left:14px;top:283px;font-size:9.5px;color:#222">Y:</div>
<div class="t" style="left:31px;top:284.5px;font-size:9.1px;color:#222">400.28</div>
<div class="abs" style="left:3px;top:300px;width:87px;height:16px;border:1px solid #3c7fb1;border-radius:3px;background:linear-gradient(#eaf6fd,#d9f0fc 48%,#bee6fd 52%,#a7d9f5);box-shadow:inset 0 0 0 1px #8fd0f0;font-size:11px;line-height:14px;text-align:center;color:#222"><i class="c">机</i><i class="c">器</i></div>
<div class="abs" style="left:3px;top:319px;width:88px;height:16px;border:1px solid #d6d6d6;border-radius:2px;background:#f4f4f4"></div>
<div class="t" style="left:5px;top:323px;font-size:8.5px;color:#8a8a8a">0 Master</div>
<svg class="abs" style="left:81px;top:325px" width="6" height="4" viewBox="0 0 6 4"><path d="M0 0H6L3 3.5Z" fill="#9a9a9a"/></svg>
<div class="abs" style="left:3px;top:338px;width:88px;height:67px;background:#c1c1c1;border:1px solid #a4a4a4;border-right-color:#e4e4e4;border-bottom-color:#e4e4e4"></div>
<div class="t" style="left:5px;top:395px;font-size:9.6px;color:#222;text-shadow:.3px 0 0 #222">T 100</div>
<div class="btn" style="left:2.5px;top:410.5px;width:87.5px;height:16px;font-family:'Liberation Serif',serif;font-weight:bold;font-size:9px;letter-spacing:1px;line-height:14px;text-align:center;padding-right:5px">B 0.2</div>
<div class="abs" style="left:2px;top:427px;width:89px;height:110px;background:#fff;border-left:2px solid #c6c6c6;border-right:2px solid #c6c6c6"></div>

<!-- DIALOG placeholder -->
<!-- dialog -->
<div class="abs" style="left:349px;top:98px;width:256px;height:113px;border-radius:5px 0 0 5px;background:linear-gradient(rgba(255,255,255,.16) 0,rgba(255,255,255,0) 16px),linear-gradient(90deg,#6f777e 0px,#565c62 10px,#3c4044 60px,#1c1e20 82px,#2e3236 86px,#17191b 95px,#0c0c0d 140px,#050505 215px);border:1px solid #c9d0d6;box-shadow:inset 0 0 0 1px #8c949a"></div>
<div class="abs" style="left:351px;top:100px;width:252px;height:1px;background:linear-gradient(90deg,#b8c0c6,#6a7076 120px,#4a4e52)"></div>
<div class="t" style="left:355px;top:103.5px;font-size:8.5px;color:#000;text-shadow:0 0 2px rgba(255,255,255,.8),0 0 4px rgba(255,255,255,.6),0 0 6px rgba(255,255,255,.4)"><i class="c">修</i><i class="c">改</i><i class="c">实</i><i class="c">体</i><i class="c">属</i><i class="c">性</i></div>
<div class="abs" style="left:565px;top:99px;width:34px;height:12px;border-radius:0 0 3px 3px;border:1px solid #5a1a14;border-top:none;background:linear-gradient(#e0a090 0%,#cf6a55 45%,#b83220 50%,#c8452c 100%);box-shadow:inset 0 0 0 1px rgba(255,220,210,.45)"></div>
<svg class="abs" style="left:577.5px;top:101.5px" width="9" height="7" viewBox="0 0 9 7"><path d="M1.2 .8L7.8 6.2M7.8 .8L1.2 6.2" stroke="#fff" stroke-width="1.9"/></svg>
<div class="abs" style="left:353px;top:119px;width:245px;height:89px;background:#f0f0f0;border:1px solid #fbfbfb;box-shadow:0 0 0 1px #6f757a"></div>
<div class="t" style="left:407px;top:134px;font-size:8.6px;color:#111"><i class="c">颜</i><i class="c">色</i>:</div>
<div class="t" style="left:407px;top:160px;font-size:8.6px;color:#111"><i class="c">线</i><i class="c">型</i>:</div>
<div class="abs" style="left:433px;top:131px;width:51px;height:14px;border:1px solid #9a9a9a;border-right-color:#fff;border-bottom-color:#fff;background:#f0f0f0"></div>
<div class="abs" style="left:435px;top:133px;width:47px;height:10px;background:#05f205"></div>
<div class="abs" style="left:433px;top:157px;width:51px;height:14px;border:1px solid #9a9a9a;border-right-color:#fff;border-bottom-color:#fff;background:#f0f0f0"></div>
<div class="abs" style="left:435px;top:159px;width:47px;height:10px;background:#c2c2c2;border:1px solid #8a8a8a"></div>
<div class="abs" style="left:437px;top:163.5px;width:43px;height:1px;background:#555"></div>
<div class="btn" style="left:493px;top:131px;width:101px;height:15px;font-size:8.6px;line-height:13px;text-align:center"><i class="c">选</i><i class="c">择</i><i class="c">颜</i><i class="c">色</i></div>
<div class="abs" style="left:493px;top:157px;width:101px;height:15px;border:1px solid #3c7fb1;border-radius:3px;background:linear-gradient(#eaf6fd,#d9f0fc 48%,#bee6fd 52%,#a7d9f5);box-shadow:inset 0 0 0 1px rgba(255,255,255,.6);font-size:8.6px;line-height:13px;text-align:center;color:#111"><i class="c">选</i><i class="c">择</i><i class="c">线</i><i class="c">型</i></div>
<div class="btn" style="left:407px;top:184px;width:65px;height:15px;font-size:8.6px;line-height:13px;text-align:center"><i class="c">修</i><i class="c">改</i></div>
<div class="btn" style="left:480px;top:184px;width:65px;height:15px;font-size:8.6px;line-height:13px;text-align:center"><i class="c">取</i><i class="c">消</i></div>

<!-- MENU placeholder -->
<!-- ctx menu -->
<div class="abs" style="left:251px;top:243px;width:138px;height:240px;background:#f4f4f4;border:1px solid #b4b4b4"></div>
<div class="abs" style="left:252px;top:244px;width:17px;height:238px;background:linear-gradient(90deg,#fafafa,#ececec 40%,#c4c4c4)"></div>
<div class="msep" style="top:262.0px"></div>
<div class="msep" style="top:283.0px"></div>
<div class="msep" style="top:333.0px"></div>
<div class="msep" style="top:353.5px"></div>
<div class="msep" style="top:374.5px"></div>
<div class="mi" style="top:248.8px;color:#000"><i class="c">重</i><i class="c">新</i><i class="c">选</i><i class="c">择</i></div>
<div class="mi" style="top:268.8px;color:#9c9c9c"><i class="c">查</i><i class="c">询</i><i class="c">信</i><i class="c">息</i></div>
<div class="mi" style="top:289.3px;color:#000"><i class="c">删</i><i class="c">除</i><i class="c">实</i><i class="c">体</i></div>
<div class="mi" style="top:303.8px;color:#000"><i class="c">删</i><i class="c">除</i>CAMs</div>
<div class="mi" style="top:318.8px;color:#000"><i class="c">删</i><i class="c">除</i><i class="c">辅</i><i class="c">助</i><i class="c">线</i></div>
<div class="mi" style="top:339.8px;color:#000"><i class="c">修</i><i class="c">改</i><i class="c">属</i><i class="c">性</i></div>
<div class="mi" style="top:359.8px;color:#9c9c9c"><i class="c">编</i><i class="c">辑</i>CAM</div>
<div class="mi" style="top:380.3px;color:#000"><i class="c">缩</i><i class="c">放</i><i class="c">至</i><i class="c">零</i><i class="c">件</i></div>
<div class="mk" style="top:380.3px;left:auto;right:218.5px">F5</div>
<div class="mi" style="top:395.3px;color:#000"><i class="c">放</i><i class="c">大</i><i class="c">至</i><i class="c">板</i><i class="c">材</i>(Sh)</div>
<div class="mk" style="top:395.3px;left:auto;right:218.5px">Ctrl+F5</div>
<div class="mi" style="top:410.3px;color:#000"><i class="c">缩</i><i class="c">放</i>(Z)</div>
<div class="mk" style="top:410.3px;left:auto;right:218.5px">F6</div>
<div class="mi" style="top:425.3px;color:#000"><i class="c">放</i><i class="c">大</i> +</div>
<div class="mk" style="top:425.3px;left:auto;right:218.5px">F3</div>
<div class="mi" style="top:440.3px;color:#000"><i class="c">缩</i><i class="c">小</i> -</div>
<div class="mk" style="top:440.3px;left:auto;right:218.5px">F4</div>
<div class="mi" style="top:455.3px;color:#000"><i class="c">前</i><i class="c">一</i><i class="c">视</i><i class="c">图</i>(U)</div>
<div class="mi" style="top:470.3px;color:#000"><i class="c">实</i><i class="c">时</i><i class="c">平</i><i class="c">移</i></div>
<!-- ARROWS placeholder -->
<!--VTB-->
<div class="abs" style="left:96px;top:102px;width:18px;height:75px;border-radius:2px;background:linear-gradient(90deg,#fbfbfb 0%,#f6f6f6 60%,#d4d4d4 100%)"></div>
<div class="abs" style="left:99px;top:104px;width:11px;height:1px;background:repeating-linear-gradient(90deg,#8a8a8a 0 1px,transparent 1px 3px)"></div>
<div class="abs" style="left:96px;top:169px;width:18px;height:8px;border-radius:0 0 2px 2px;background:linear-gradient(90deg,#a4a4a4,#d6d6d6 55%,#f4f4f4)"></div>
<svg class="abs" style="left:106px;top:170.5px" width="5" height="5" viewBox="0 0 5 5"><path d="M.5 0V5" stroke="#111" stroke-width="1"/><path d="M2 0V5L4.8 2.5Z" fill="#111"/></svg>
<svg class="ic" style="left:97.5px;top:108.0px;transform:none" viewBox="0 0 14 14"><path d="M1.5 2.5L8.5 9M1.5 8L9 3" stroke="#e01818" stroke-width="1.3"/><path d="M4 11.5L13 3.5" stroke="#222" stroke-width="1.4"/></svg>
<svg class="ic" style="left:97.5px;top:124.0px;transform:none" viewBox="0 0 14 14"><rect x="2.5" y="6" width="9.5" height="6" fill="#f4f4f4" stroke="#222" stroke-width="1.2"/><path d="M2 2L9.5 9M2 8L9.5 2.5" stroke="#e01818" stroke-width="1.3"/></svg>
<svg class="ic" style="left:97.5px;top:139.0px;transform:none" viewBox="0 0 14 14"><path d="M1.5 2.5L8.5 9M1.5 8L9 3" stroke="#e01818" stroke-width="1.3"/><path d="M5.5 10H13" stroke="#111" stroke-width="1.2"/><path d="M6 10L8 8.3V11.7ZM13.5 10L11.5 8.3V11.7Z" fill="#111"/></svg>
<svg class="ic" style="left:97.5px;top:154.0px;transform:none" viewBox="0 0 14 14"><path d="M1.5 2.5L8.5 9M1.5 8L9 3" stroke="#e01818" stroke-width="1.3"/><path d="M3 12L12.5 4M5.5 13.5L13.5 7" stroke="#20a030" stroke-width="1.4"/><path d="M6 8L8 11" stroke="#e01818" stroke-width="1.3"/></svg>
<div class="abs" style="left:96px;top:328px;width:18px;height:120px;border-radius:2px;background:linear-gradient(90deg,#fbfbfb 0%,#f6f6f6 60%,#d4d4d4 100%)"></div>
<div class="abs" style="left:99px;top:330px;width:11px;height:1px;background:repeating-linear-gradient(90deg,#8a8a8a 0 1px,transparent 1px 3px)"></div>
<div class="abs" style="left:96px;top:440px;width:18px;height:8px;border-radius:0 0 2px 2px;background:linear-gradient(90deg,#a4a4a4,#d6d6d6 55%,#f4f4f4)"></div>
<svg class="abs" style="left:106px;top:441.5px" width="5" height="5" viewBox="0 0 5 5"><path d="M.5 0V5" stroke="#111" stroke-width="1"/><path d="M2 0V5L4.8 2.5Z" fill="#111"/></svg>
<svg class="ic" style="left:97.5px;top:334.7px;transform:none" viewBox="0 0 14 14"><path d="M2.5 1H8L10.5 3.5V12.5H2.5Z" fill="#fff" stroke="#222" stroke-width="1.1"/><circle cx="9" cy="8" r="2.6" fill="#c8ecf0" stroke="#444" stroke-width=".9"/><path d="M10.8 10L13 12.8" stroke="#222" stroke-width="1.4"/></svg>
<svg class="ic" style="left:97.5px;top:349.5px;transform:none" viewBox="0 0 14 14"><path d="M2 4H10V12.5H2Z" fill="#fff" stroke="#333" stroke-width="1.1"/><path d="M3 3.5L5 1.5L7 3.5" fill="none" stroke="#555" stroke-width="1"/><path d="M5 9.5L11 1.5" stroke="#e0c820" stroke-width="1.8"/><path d="M7 10L12 3" stroke="#2030c0" stroke-width="1.1"/><path d="M3.5 8L5 10.5L7 9" stroke="#222" stroke-width="1" fill="none"/></svg>
<svg class="ic" style="left:97.5px;top:364.8px;transform:none" viewBox="0 0 14 14"><rect x="1" y="1.5" width="12.5" height="11.5" fill="#f4e838"/><text x="6" y="11" text-anchor="middle" font-family="Liberation Sans" font-weight="bold" font-size="9.5" fill="#e02010">S</text><path d="M2 2.5H12M11.5 2.5V12.5" stroke="#222" stroke-width="1"/><path d="M10 10.5L11.5 12.8L13 10.5M10 4.5L11.5 2.5L13 4.5M3.5 1L1.5 2.5L3.5 4" stroke="#222" stroke-width=".8" fill="none"/></svg>
<svg class="ic" style="left:97.5px;top:379.5px;transform:none" viewBox="0 0 14 14"><path d="M1 7L5.5 2.5V5.5H7V8.5H5.5V11.5Z" fill="#e01818"/><path d="M13.5 7L9 2.5V5.5H7V8.5H9V11.5Z" fill="#1828d8"/></svg>
<svg class="ic" style="left:97.5px;top:393.0px;transform:none" viewBox="0 0 14 14"><text x="6.8" y="9" text-anchor="middle" font-family="Liberation Sans" font-weight="bold" font-size="10.5" fill="#e01818" stroke="#e01818" stroke-width=".3">NC</text><rect x="7.5" y="8.5" width="5.5" height="5" fill="#4a4410" stroke="#1a1a08" stroke-width=".7"/><rect x="9" y="9" width="2.8" height="1.8" fill="#e8e8c0"/></svg>
<svg class="ic" style="left:97.5px;top:408.7px;transform:none" viewBox="0 0 14 14"><path d="M5 1.5H10L12.5 4V10.5H5Z" fill="#fff" stroke="#222" stroke-width="1"/><path d="M2 5H8L8 11H2Z" fill="#d8d040" stroke="#3a3a10" stroke-width=".9"/><circle cx="8.5" cy="9.5" r="2.4" fill="#e8e060" stroke="#3a3a10" stroke-width=".9"/><path d="M1 7H4" stroke="#222" stroke-width="1.2"/></svg>
<svg class="ic" style="left:97.5px;top:423.7px;transform:none" viewBox="0 0 14 14"><path d="M3 3H9.5V9H3Z" fill="#d8d040" stroke="#3a3a10" stroke-width="1"/><circle cx="8.5" cy="9.5" r="2.8" fill="#e8e060" stroke="#3a3a10" stroke-width="1"/><path d="M1.5 6H5" stroke="#222" stroke-width="1.2"/></svg>
<div class="abs" style="left:96px;top:448px;width:18px;height:92px;border-radius:2px;background:linear-gradient(90deg,#fbfbfb 0%,#f6f6f6 60%,#d4d4d4 100%)"></div>
<div class="abs" style="left:99px;top:450px;width:11px;height:1px;background:repeating-linear-gradient(90deg,#8a8a8a 0 1px,transparent 1px 3px)"></div>
<svg class="ic" style="left:97.5px;top:455.0px;transform:none" viewBox="0 0 14 14"><path d="M2 3H8V7H6.5L4.5 9.5L2.5 7H2Z" fill="#e030d0"/><path d="M1 12.5L13 1.5" stroke="#222" stroke-width="1.1"/><path d="M7.5 7H13.5L11.5 9.5V12.5H9.5V9.5Z" fill="#e8e040" stroke="#3a3a10" stroke-width=".8"/></svg>
<svg class="ic" style="left:97.5px;top:470.0px;transform:none" viewBox="0 0 14 14"><circle cx="7" cy="7" r="5.4" fill="#f8f8f8" stroke="#a8a8a8" stroke-width=".9"/><path d="M8 8.3L4.6 4.6" stroke="#111" stroke-width="1"/><path d="M3.6 3.6L6.4 4.3L4.3 6.4Z" fill="#111"/></svg>
<svg class="ic" style="left:97.5px;top:485.8px;transform:none" viewBox="0 0 14 14"><circle cx="7" cy="7" r="5.4" fill="#f8f8f8" stroke="#a8a8a8" stroke-width=".9"/><path d="M4.8 4.8L9.2 9.2" stroke="#111" stroke-width="1"/><path d="M3.8 3.8L6.4 4.4L4.4 6.4ZM10.2 10.2L7.6 9.6L9.6 7.6Z" fill="#111"/></svg>
<svg class="ic" style="left:97.5px;top:500.8px;transform:none" viewBox="0 0 14 14"><path d="M1.5 12H13M2 9.5L10.5 2.5" stroke="#111" stroke-width="1.2"/><path d="M8.5 5.5C10 6.5 10.5 8 10.5 9.5" stroke="#111" stroke-width="1" fill="none"/><path d="M8 4.5L10 6.5L7.8 6.5ZM9 10.5H12L10.5 8.5Z" fill="#111"/></svg>
<svg class="ic" style="left:97.5px;top:515.5px;transform:none" viewBox="0 0 14 14"><path d="M2 3V11.5M12 3V11.5M2 7.2H12" stroke="#111" stroke-width="1.3"/><path d="M2.5 7.2L5 5.5V9ZM11.5 7.2L9 5.5V9Z" fill="#111"/></svg>
<!-- menu icons -->
<svg class="ic" style="left:253.5px;top:266.0px;width:13px;height:13px" viewBox="0 0 14 14"><path d="M4 5C4 1.5 9.5 1.5 9.5 5C9.5 7 7 7 7 9" fill="none" stroke="#a8a8a8" stroke-width="2"/><circle cx="7" cy="11.3" r="1.1" fill="#a8a8a8"/><path d="M1 12L12 5" stroke="#b0b0b0" stroke-width="1.1"/></svg>
<svg class="ic" style="left:253.5px;top:286.5px;width:13px;height:13px" viewBox="0 0 14 14"><path d="M1.5 2.5L8.5 9M1.5 8L9 3" stroke="#e01818" stroke-width="1.3"/><path d="M4 11.5L13 3.5" stroke="#222" stroke-width="1.4"/></svg>
<svg class="ic" style="left:253.5px;top:301.0px;width:13px;height:13px" viewBox="0 0 14 14"><rect x="2.5" y="6" width="9.5" height="6" fill="#f4f4f4" stroke="#222" stroke-width="1.2"/><path d="M2 2L9.5 9M2 8L9.5 2.5" stroke="#e01818" stroke-width="1.3"/></svg>
<svg class="ic" style="left:253.5px;top:316.0px;width:13px;height:13px" viewBox="0 0 14 14"><path d="M1.5 2.5L8.5 9M1.5 8L9 3" stroke="#e01818" stroke-width="1.3"/><path d="M3 12L12.5 4M5.5 13.5L13.5 7" stroke="#20a030" stroke-width="1.4"/><path d="M6 8L8 11" stroke="#e01818" stroke-width="1.3"/></svg>
<svg class="ic" style="left:253.5px;top:337.0px;width:13px;height:13px" viewBox="0 0 14 14"><rect x="1" y="2" width="2" height="3.5" fill="#2030d0"/><rect x="3" y="2" width="2" height="3.5" fill="#d02020"/><rect x="5" y="2" width="2" height="3.5" fill="#e0c020"/><path d="M7.5 5C9 3 11 3 13 3.5M8 7L13 6" stroke="#555" stroke-width="1" fill="none"/><path d="M1 8.5H8" stroke="#20a040" stroke-width="1.2"/><path d="M1 11.5H13" stroke="#111" stroke-width="2" stroke-dasharray="3 1"/></svg>
<svg class="ic" style="left:253.5px;top:377.5px;width:13px;height:13px" viewBox="0 0 14 14"><path d="M9.5 9.5L13 13" stroke="#1020c0" stroke-width="2.4"/><ellipse cx="6.5" cy="6" rx="5" ry="4.5" fill="#d8f0f0" stroke="#222" stroke-width="1.3"/><rect x="4" y="3.5" width="5" height="5" fill="#c8c030" stroke="#444" stroke-width=".6"/></svg>
<svg class="ic" style="left:253.5px;top:392.5px;width:13px;height:13px" viewBox="0 0 14 14"><path d="M9.5 9.5L13 13" stroke="#1020c0" stroke-width="2.4"/><ellipse cx="6.5" cy="6" rx="5" ry="4.5" fill="#d8f0f0" stroke="#222" stroke-width="1.3"/><rect x="3.5" y="3.5" width="6" height="5" fill="#b8b028" stroke="#444" stroke-width=".6"/><path d="M5 5H8M5 7H8" stroke="#333" stroke-width=".7"/></svg>
<svg class="ic" style="left:253.5px;top:407.5px;width:13px;height:13px" viewBox="0 0 14 14"><rect x="1.5" y="1.5" width="7" height="6" fill="#fff" stroke="#222" stroke-width="1"/><rect x="4" y="3.5" width="7.5" height="6.5" fill="#d0ecec" stroke="#222" stroke-width="1.1"/><path d="M4.5 9L10 4" stroke="#20a0a0" stroke-width="1"/><path d="M10.5 10L13 13" stroke="#1020c0" stroke-width="2"/></svg>
<svg class="ic" style="left:253.5px;top:422.5px;width:13px;height:13px" viewBox="0 0 14 14"><path d="M9.5 9.5L13 13" stroke="#1020c0" stroke-width="2.4"/><ellipse cx="6.5" cy="6" rx="5" ry="4.5" fill="#d8f0f0" stroke="#222" stroke-width="1.3"/><path d="M3.5 6L6.5 4L9.5 6L6.5 8Z" fill="#c8c030" stroke="#444" stroke-width=".6"/></svg>
<svg class="ic" style="left:253.5px;top:437.5px;width:13px;height:13px" viewBox="0 0 14 14"><path d="M9.5 9.5L13 13" stroke="#1020c0" stroke-width="2.4"/><ellipse cx="6.5" cy="6" rx="5" ry="4.5" fill="#d8f0f0" stroke="#222" stroke-width="1.3"/><rect x="3.5" y="4.5" width="6" height="3" fill="#c8c030" stroke="#444" stroke-width=".6"/></svg>
<svg class="ic" style="left:253.5px;top:452.5px;width:13px;height:13px" viewBox="0 0 14 14"><ellipse cx="6.5" cy="7" rx="5" ry="4.5" fill="#d8f0f0" stroke="#555" stroke-width="1"/><path d="M2 9L8 3L11 12Z" fill="none" stroke="#2030c0" stroke-width="1"/><path d="M2 8L7 4L6 9Z" fill="#e02020"/></svg>
<svg class="ic" style="left:253.5px;top:467.5px;width:13px;height:13px" viewBox="0 0 14 14"><path d="M2 11C1 8 3 6 5 7C7 8 5 11 3 12H9" fill="none" stroke="#3040c0" stroke-width="1.3"/><path d="M7 5L11 1.5L12.5 5L10 4.5L8.5 7Z" fill="#8890d0" stroke="#3040a0" stroke-width=".6"/></svg>
<!--/VTB-->
<!-- arrows -->
<svg class="abs" style="left:0;top:0" width="600" height="531" viewBox="0 0 600 531">
<path d="M190.8 320.6L240 339.2" stroke="#f01212" stroke-width="2.3"/>
<path d="M250 343.6L241.2 333.4L236 344.4Z" fill="#f01212"/>
<path d="M325.3 341L396 194.5" stroke="#f01212" stroke-width="2.1"/>
<path d="M401.5 183.8L390.7 193.2L400.9 198Z" fill="#f01212"/>
</svg>


</div></body></html>
